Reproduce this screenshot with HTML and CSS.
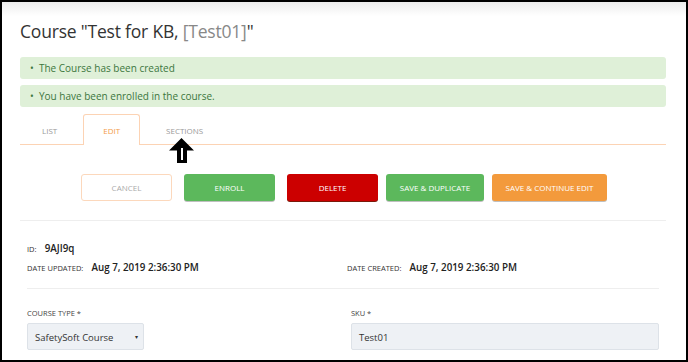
FILE: index.html
```html
<!DOCTYPE html>
<html lang="en">
<head>
    <meta charset="UTF-8">
    <title>Course Test for KB</title>
    <link rel="stylesheet" href="styles.css">
</head>
<body>
    <div class="frame">
        <div class="page">
            <h1 class="title">Course "Test for KB, <span class="muted">[Test01]</span>"</h1>

            <div class="alert">&bull;&nbsp; The Course has been created</div>
            <div class="alert">&bull;&nbsp; You have been enrolled in the course.</div>

            <div class="tabs">
                <a class="tab">LIST</a>
                <a class="tab active">EDIT</a>
                <a class="tab">SECTIONS</a>
            </div>

            <!-- pointer drawn over the tab bar -->
            <svg class="pointer" width="26" height="26" viewBox="0 0 26 26">
                <polygon points="0,12.5 12.5,0 25,12.5 18,12.5 18,25 8,25 8,12.5" fill="#000"/>
                <rect x="12" y="10" width="2" height="12" fill="#fff"/>
            </svg>

            <div class="actions">
                <button class="btn btn-cancel">CANCEL</button>
                <button class="btn btn-green">ENROLL</button>
                <button class="btn btn-red">DELETE</button>
                <button class="btn btn-green btn-dup">SAVE &amp; DUPLICATE</button>
                <button class="btn btn-orange">SAVE &amp; CONTINUE EDIT</button>
            </div>

            <div class="details">
                <div class="info">
                    <div class="info-row">
                        <span class="key">ID:</span>
                        <span class="value">9AJI9q</span>
                    </div>
                    <div class="info-cols">
                        <div class="info-row">
                            <span class="key">DATE UPDATED:</span>
                            <span class="value">Aug 7, 2019 2:36:30 PM</span>
                        </div>
                        <div class="info-row">
                            <span class="key">DATE CREATED:</span>
                            <span class="value">Aug 7, 2019 2:36:30 PM</span>
                        </div>
                    </div>
                </div>

                <div class="fields">
                    <div class="field">
                        <label>COURSE TYPE *</label>
                        <div class="select">SafetySoft Course <span class="caret">&#9662;</span></div>
                    </div>
                    <div class="field">
                        <label>SKU *</label>
                        <div class="input">Test01</div>
                    </div>
                </div>
            </div>
        </div>
    </div>
</body>
</html>
```

FILE: styles.css
```css
body {
    margin: 0;
    font-family: "Open Sans", "Noto Sans", sans-serif;
    background-color: #fff;
}

.frame {
    width: 688px;
    height: 362px;
    box-sizing: border-box;
    border: 2px solid #000;
    overflow: hidden;
    background: linear-gradient(#ececec 0, #fff 14px);
}

.page {
    position: relative;
    padding: 0 20px 0 18px;
}

.title {
    margin: 0;
    padding-top: 17px;
    font-size: 17.5px;
    font-weight: normal;
    color: #333;
    line-height: 24px;
    letter-spacing: -0.2px;
}

.muted {
    color: #888;
}

.alert {
    margin-top: 6px;
    height: 22px;
    line-height: 22px;
    padding-left: 10px;
    font-size: 10px;
    color: #3c763d;
    background-color: #dff0d8;
    border-radius: 3px;
}

.title + .alert {
    margin-top: 14px;
}

.tabs {
    display: flex;
    margin-top: 7px;
    padding-left: 2px;
    border-bottom: 1px solid #fcd3b4;
}

.tab {
    padding: 0 19px;
    margin-right: 6px;
    height: 29px;
    line-height: 31px;
    font-size: 8px;
    color: #999;
    border: 1px solid transparent;
    border-bottom: none;
    border-radius: 3px 3px 0 0;
}

.tab.active {
    color: #f39c4a;
    border-color: #fcd3b4;
    background-color: #fff;
    margin-bottom: -1px;
    height: 30px;
}

.pointer {
    position: absolute;
    left: 167px;
    top: 136px;
}

.actions {
    display: flex;
    justify-content: center;
    margin-top: 29px;
    padding-left: 2px;
    padding-bottom: 19px;
    border-bottom: 1px solid #eee;
}

.btn {
    height: 27px;
    width: 91px;
    margin: 0 6px;
    border: none;
    border-radius: 3px;
    font-family: inherit;
    font-size: 8px;
    color: #fff;
    box-shadow: 0 1px 0 rgba(0, 0, 0, 0.25);
}

.btn-cancel {
    background-color: #fff;
    color: #aaa;
    border: 1px solid #fcd8bc;
    box-shadow: none;
}

.btn-green {
    background-color: #5cb85c;
}

.btn-red {
    background-color: #cc0000;
    box-shadow: 0 1px 0 #7a1a0a;
}

.btn-dup {
    width: 98px;
    margin: 0 4px 0 2px;
}

.btn-orange {
    width: 115px;
    margin-left: 4px;
    background-color: #f39a3c;
}

.details {
    padding: 0 7px;
}

.info {
    padding: 16px 0 13px;
    border-bottom: 1px solid #eee;
}

.info-cols {
    display: grid;
    grid-template-columns: 1fr 1fr;
}

.info-cols .info-row + .info-row {
    padding-left: 4px;
}

.info-row {
    height: 19px;
    line-height: 19px;
}

.key {
    font-size: 7.5px;
    color: #333;
    margin-right: 4px;
}

.value {
    font-size: 9.8px;
    font-weight: 600;
    color: #222;
}

.fields {
    display: grid;
    grid-template-columns: 1fr 1fr;
    padding-top: 19px;
}

.field label {
    display: block;
    font-size: 7.5px;
    color: #444;
    margin-bottom: 5px;
}

.field + .field {
    padding-left: 8px;
}

.select,
.input {
    height: 27px;
    line-height: 27px;
    box-sizing: border-box;
    padding-left: 7px;
    font-size: 9.5px;
    color: #333;
    background-color: #eef1f5;
    border: 1px solid #dde2e8;
    border-radius: 2px;
}

.select {
    width: 117px;
}

.caret {
    float: right;
    margin-right: 5px;
    font-size: 6px;
}
```
